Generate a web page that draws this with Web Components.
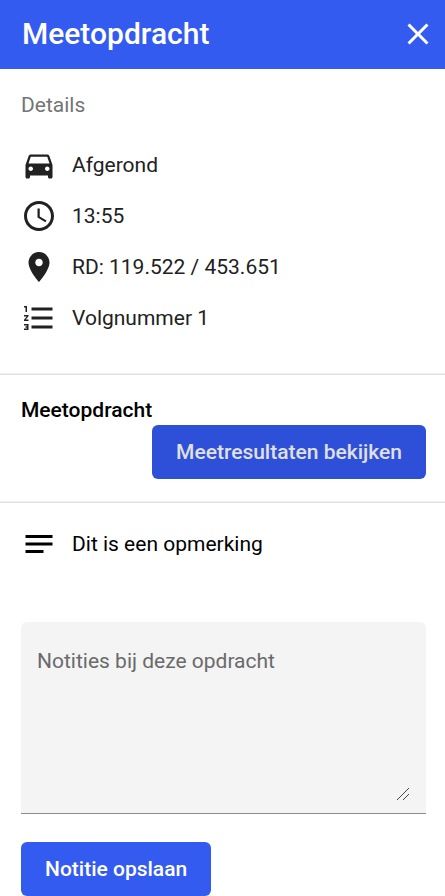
<!DOCTYPE html>
<html lang="nl">
<head>
<meta charset="utf-8">
<meta name="viewport" content="width=device-width, initial-scale=1">
<title>Meetopdracht</title>
<style>
  body { margin: 0; background: #fff; color: #212121; font: 400 21px/30px Roboto, "Liberation Sans", sans-serif; }
</style>
</head>
<body>
<task-panel></task-panel>

<script>
const define = (name, html, setup) => {
  const template = document.createElement('template');
  template.innerHTML = html;
  customElements.define(name, class extends HTMLElement {
    constructor() {
      super();
      this.attachShadow({ mode: 'open' }).append(template.content.cloneNode(true));
    }
    connectedCallback() { if (setup) setup(this, this.shadowRoot); }
  });
};

const icons = {
  close: 'M19 6.41L17.59 5 12 10.59 6.41 5 5 6.41 10.59 12 5 17.59 6.41 19 12 13.41 17.59 19 19 17.59 13.41 12z',
  car: 'M18.92 6.01C18.72 5.42 18.16 5 17.5 5h-11c-.66 0-1.21.42-1.42 1.01L3 12v8c0 .55.45 1 1 1h1c.55 0 1-.45 1-1v-1h12v1c0 .55.45 1 1 1h1c.55 0 1-.45 1-1v-8l-2.08-5.99zM6.5 16c-.83 0-1.5-.67-1.5-1.5S5.67 13 6.5 13s1.5.67 1.5 1.5S7.33 16 6.5 16zm11 0c-.83 0-1.5-.67-1.5-1.5s.67-1.5 1.5-1.5 1.5.67 1.5 1.5-.67 1.5-1.5 1.5zM5 11l1.5-4.5h11L19 11H5z',
  clock: 'M11.99 2C6.47 2 2 6.48 2 12s4.47 10 9.99 10C17.52 22 22 17.52 22 12S17.52 2 11.99 2zM12 20c-4.42 0-8-3.58-8-8s3.58-8 8-8 8 3.58 8 8-3.58 8-8 8zm.5-13H11v6l5.25 3.15.75-1.23-4.5-2.67z',
  place: 'M12 2C8.13 2 5 5.13 5 9c0 5.25 7 13 7 13s7-7.75 7-13c0-3.87-3.13-7-7-7zm0 9.5c-1.38 0-2.5-1.12-2.5-2.5s1.12-2.5 2.5-2.5 2.5 1.12 2.5 2.5-1.12 2.5-2.5 2.5z',
  numbered: 'M2 17h2v.5H3v1h1v.5H2v1h3v-4H2v1zm1-9h1V4H2v1h1v3zm-1 3h1.8L2 13.1v.9h3v-1H3.2L5 10.9V10H2v1zm5-6v2h14V5H7zm0 14h14v-2H7v2zm0-6h14v-2H7v2z',
  notes: 'M3 18h12v-2H3v2zM3 6v2h18V6H3zm0 7h18v-2H3v2z'
};

define('app-icon', `
  <style>
    :host { display: block; flex: none; width: 36px; height: 36px; }
    svg { display: block; width: 100%; height: 100%; fill: currentColor; }
  </style>
  <svg viewBox="0 0 24 24" aria-hidden="true"><path fill-rule="evenodd"/></svg>`,
  (host, root) => root.querySelector('path').setAttribute('d', icons[host.getAttribute('name')]));

define('panel-header', `
  <style>
    :host { display: flex; align-items: center; justify-content: space-between; height: 69px;
      box-sizing: border-box; padding: 0 9px 2px 22px; background: #335bf0; color: #fff; }
    h1 { margin: 0; font-size: 30px; line-height: 36px; font-weight: 500; }
    button { padding: 0; border: 0; background: none; color: inherit; cursor: pointer; }
  </style>
  <h1><slot></slot></h1>
  <button type="button" aria-label="Sluiten"><app-icon name="close"></app-icon></button>`);

define('panel-section', `
  <style>
    :host { display: block; padding: 21px 19px 22px 21px; }
    :host([divided]) { border-top: 1px solid #f0f0f0; box-shadow: inset 0 1px #e0e0e0; }
  </style>
  <slot></slot>`);

define('icon-row', `
  <style>
    :host { display: flex; align-items: center; gap: 15px; min-height: 36px; }
  </style>
  <app-icon></app-icon><span><slot></slot></span>`,
  (host, root) => {
    const icon = document.createElement('template');
    icon.innerHTML = `<app-icon name="${host.getAttribute('icon')}"></app-icon>`;
    root.querySelector('app-icon').replaceWith(icon.content);
  });

define('action-button', `
  <style>
    :host { display: inline-block; vertical-align: top; }
    button { display: block; height: 54px; padding: 0 24px; border: 0; border-radius: 6px;
      background: #335bf0; color: #fff; font: inherit; font-weight: 500; cursor: pointer; }
    :host([pressed]) button { background: #2e50d8; color: #e0e0e0; }
  </style>
  <button type="button"><slot></slot></button>`);

define('notes-field', `
  <style>
    :host { display: block; padding: 16px 16px 12px; background: #f4f4f4; border-bottom: 1px solid #8c8c8c;
      border-radius: 6px 6px 0 0; }
    textarea { display: block; box-sizing: border-box; width: 100%; height: 163px; padding: 8px 0 0;
      border: 0; outline: 0; background: none; color: #212121; font: inherit; resize: vertical; }
    textarea::placeholder { color: #6a6a6a; opacity: 1; }
    textarea::-webkit-resizer { background: url("data:image/svg+xml,%3Csvg xmlns='http://www.w3.org/2000/svg' width='15' height='15'%3E%3Cpath d='M2 14L14 2M8 14L14 8' stroke='%23444'/%3E%3C/svg%3E") no-repeat; }
  </style>
  <textarea aria-label="Notities bij deze opdracht" placeholder="Notities bij deze opdracht"></textarea>`);

define('task-panel', `
  <style>
    :host { display: block; }
    h2 { margin: 0; font-size: 21px; line-height: 30px; font-weight: 400; color: #757575; }
    h3 { margin: 0; font-size: 21px; line-height: 30px; font-weight: 500; color: #000; }
    .rows { display: grid; gap: 15px; margin: 27px 0 15px; }
    .end { display: flex; justify-content: flex-end; }
    .remark { color: #000; }
    notes-field { margin: 60px 0 28px; }
    .last { padding-top: 24px; padding-bottom: 0; }
  </style>
  <panel-header>Meetopdracht</panel-header>
  <main>
    <panel-section>
      <h2>Details</h2>
      <div class="rows">
        <icon-row icon="car">Afgerond</icon-row>
        <icon-row icon="clock">13:55</icon-row>
        <icon-row icon="place">RD: 119.522 / 453.651</icon-row>
        <icon-row icon="numbered">Volgnummer 1</icon-row>
      </div>
    </panel-section>
    <panel-section divided>
      <h3>Meetopdracht</h3>
      <div class="end"><action-button pressed>Meetresultaten bekijken</action-button></div>
    </panel-section>
    <panel-section divided class="last">
      <icon-row class="remark" icon="notes">Dit is een opmerking</icon-row>
      <notes-field></notes-field>
      <action-button>Notitie opslaan</action-button>
    </panel-section>
  </main>`);
</script>
</body>
</html>
